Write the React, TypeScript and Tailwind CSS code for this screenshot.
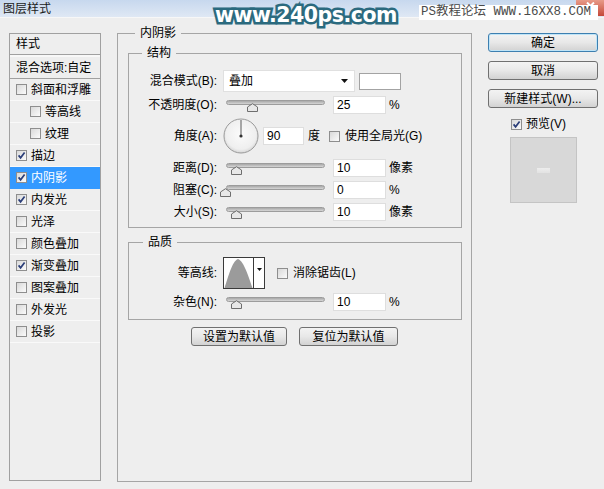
import React from "react";

function Check({ checked }: { checked?: boolean }) {
  return (
    <span className="relative inline-block w-[11px] h-[11px] shrink-0 border border-[#8e8e8e] bg-gradient-to-br from-[#d9d9d9] to-[#fbfbfb]">
      {checked && (
        <svg className="absolute left-0 top-0" width="9" height="9" viewBox="0 0 9 9">
          <path d="M1.6 4.4 L3.6 6.8 L7.6 1.6" stroke="#2a3d78" strokeWidth="1.7" fill="none" />
        </svg>
      )}
    </span>
  );
}

function Slider({ pos }: { pos: number }) {
  return (
    <div className="relative w-[104px] h-[22px] shrink-0">
      <div className="absolute left-[3px] right-[2px] top-[6px] h-[5px] rounded-full border border-[#9c9c9c] bg-gradient-to-b from-[#a8a8a8] to-[#d6d6d6]" />
      <svg className="absolute top-[9px]" style={{ left: pos - 5 }} width="11" height="9" viewBox="0 0 11 9">
        <path d="M0.5 4 L5.5 0.7 L10.5 4 V8.5 H0.5 Z" fill="#e8e8e8" stroke="#6e6e6e" />
      </svg>
    </div>
  );
}

function Label({ children }: { children: React.ReactNode }) {
  return <div className="w-[90px] shrink-0 pr-[2px] text-right whitespace-nowrap">{children}</div>;
}

function NumBox({ value }: { value: string }) {
  return (
    <div className="ml-[6px] w-[53px] h-[18px] shrink-0 bg-white border border-[#dedede] pl-[3px] flex items-center">
      {value}
    </div>
  );
}

function SliderRow({ label, pos, value, unit }: { label: string; pos: number; value: string; unit: string }) {
  return (
    <div className="flex items-center h-[22px]">
      <Label>{label}</Label>
      <div className="ml-[4px]">
        <Slider pos={pos} />
      </div>
      <NumBox value={value} />
      <span className="ml-[3px]">{unit}</span>
    </div>
  );
}

function Btn({ children, primary, className }: { children: React.ReactNode; primary?: boolean; className?: string }) {
  return (
    <div
      className={
        (primary
          ? "border-[#3d7fb0] shadow-[inset_0_0_0_1px_#bfe4f7] "
          : "border-[#707070] ") +
        "h-[19px] rounded-[3px] border bg-gradient-to-b from-[#f3f3f3] via-[#e8e8e8] to-[#d2d2d2] flex items-center justify-center leading-none text-[12px] " +
        (className || "")
      }
    >
      {children}
    </div>
  );
}

const items: { name: string; checked?: boolean; indent?: boolean; selected?: boolean }[] = [
  { name: "斜面和浮雕" },
  { name: "等高线", indent: true },
  { name: "纹理", indent: true },
  { name: "描边", checked: true },
  { name: "内阴影", checked: true, selected: true },
  { name: "内发光", checked: true },
  { name: "光泽" },
  { name: "颜色叠加" },
  { name: "渐变叠加", checked: true },
  { name: "图案叠加" },
  { name: "外发光" },
  { name: "投影" },
];

export default function App() {
  return (
    <div className="relative w-[604px] h-[489px] overflow-hidden bg-[#eeeeee] text-[12px] leading-[16px] text-black font-['Liberation_Sans','Noto_Sans_CJK_SC',sans-serif]">
      {/* title bar */}
      <div className="h-[18px] border-b border-[#f7f7f7] bg-gradient-to-b from-[#c7d8ee] to-[#dfe8f4] pl-[3px] flex items-center text-[#1b1b1b]">
        图层样式
      </div>

      <div className="flex pt-[15px]">
        {/* left panel */}
        <div className="ml-[9px] w-[92px] h-[448px] border border-[#a0a0a0] flex flex-col">
          <div className="h-[21px] pl-[6px] flex items-center border-b border-[#a0a0a0]">样式</div>
          <div className="h-[24px] pl-[6px] flex items-center border-t-[2px] border-t-[#f8f8f8] border-b border-b-[#a0a0a0] whitespace-nowrap">
            混合选项:自定
          </div>
          {items.map((it) => (
            <div
              key={it.name}
              className={
                "h-[22px] flex items-center border-b " +
                (it.selected ? "bg-[#3399ff] text-white border-[#3399ff] " : "border-[#f9f9f9] ") +
                (it.indent ? "pl-[20px]" : "pl-[6px]")
              }
            >
              <Check checked={it.checked} />
              <span className="ml-[4px] whitespace-nowrap">{it.name}</span>
            </div>
          ))}
        </div>

        {/* main fieldset */}
        <div className="relative ml-[16px] w-[355px] h-[449px] border border-[#a5a5a5] pt-[19px] pl-[10px]">
          <span className="absolute left-[17px] top-[-9px] px-[5px] bg-[#eeeeee] leading-[16px]">内阴影</span>

          {/* 结构 */}
          <div className="relative w-[334px] h-[175px] border border-[#a5a5a5] pt-[16px]">
            <span className="absolute left-[13px] top-[-9px] px-[5px] bg-[#eeeeee] leading-[16px]">结构</span>
            <div className="flex flex-col">
              <div className="flex items-center h-[22px]">
                <Label>混合模式(B):</Label>
                <div className="relative ml-[4px] w-[132px] h-[22px] bg-white border border-[#e0e0e0] pl-[5px] flex items-center">
                  叠加
                  <svg className="absolute right-[6px] top-[8px]" width="7" height="4" viewBox="0 0 7 4">
                    <path d="M0 0 H7 L3.5 4 Z" fill="#111" />
                  </svg>
                </div>
                <div className="ml-[4px] w-[42px] h-[17px] border border-[#a3a3a3] bg-white" />
              </div>

              <div className="mt-[2px]">
                <SliderRow label="不透明度(O):" pos={29} value="25" unit="%" />
              </div>

              <div className="mt-[2px] flex items-center h-[36px]">
                <Label>角度(A):</Label>
                <svg className="ml-[4px] shrink-0" width="36" height="36" viewBox="0 0 36 36">
                  <defs>
                    <radialGradient id="dialg" cx="50%" cy="45%" r="55%">
                      <stop offset="0%" stopColor="#fbfbfb" />
                      <stop offset="80%" stopColor="#efefef" />
                      <stop offset="100%" stopColor="#d6d6d6" />
                    </radialGradient>
                  </defs>
                  <circle cx="18" cy="18" r="17" fill="url(#dialg)" stroke="#9a9a9a" />
                  <line x1="18" y1="18" x2="18" y2="2" stroke="#5a5a5a" strokeWidth="1" />
                  <circle cx="18" cy="18" r="1.6" fill="#333" />
                </svg>
                <div className="ml-[4px] w-[41px] h-[18px] shrink-0 bg-white border border-[#dedede] pl-[3px] flex items-center">
                  90
                </div>
                <span className="ml-[4px]">度</span>
                <span className="ml-[9px] flex items-center">
                  <Check />
                </span>
                <span className="ml-[5px] whitespace-nowrap">使用全局光(G)</span>
              </div>

              <div className="mt-[3px]">
                <SliderRow label="距离(D):" pos={13} value="10" unit="像素" />
              </div>
              <SliderRow label="阻塞(C):" pos={2} value="0" unit="%" />
              <SliderRow label="大小(S):" pos={13} value="10" unit="像素" />
            </div>
          </div>

          {/* 品质 */}
          <div className="relative mt-[14px] w-[334px] h-[78px] border border-[#a5a5a5] pt-[14px]">
            <span className="absolute left-[14px] top-[-9px] px-[5px] bg-[#eeeeee] leading-[16px]">品质</span>
            <div className="flex items-center h-[32px]">
              <Label>等高线:</Label>
              <div className="ml-[4px] flex w-[42px] h-[32px] border border-[#3a3a3a] bg-white shrink-0">
                <svg width="29" height="30" viewBox="0 0 29 30">
                  <path d="M0.5 30 C4 20 8 3 14 1 C20 3 25 20 28.5 30 Z" fill="#9b9b9b" />
                </svg>
                <div className="w-[11px] border-l border-[#3a3a3a] flex justify-center pt-[10px]">
                  <svg width="5" height="3" viewBox="0 0 5 3">
                    <path d="M0 0 H5 L2.5 3 Z" fill="#111" />
                  </svg>
                </div>
              </div>
              <span className="ml-[12px] flex items-center">
                <Check />
              </span>
              <span className="ml-[5px] whitespace-nowrap">消除锯齿(L)</span>
            </div>
            <div className="mt-[3px] flex items-center h-[20px]">
              <Label>杂色(N):</Label>
              <div className="ml-[4px]">
                <Slider pos={13} />
              </div>
              <NumBox value="10" />
              <span className="ml-[3px]">%</span>
            </div>
          </div>

          <div className="mt-[7px] flex">
            <Btn className="ml-[63px] w-[96px]">设置为默认值</Btn>
            <Btn className="ml-[12px] w-[99px]">复位为默认值</Btn>
          </div>
        </div>

        {/* right column */}
        <div className="ml-[16px] w-[110px] flex flex-col">
          <Btn primary>确定</Btn>
          <Btn className="mt-[9px]">取消</Btn>
          <Btn className="mt-[9px]">新建样式(W)...</Btn>
          <div className="mt-[10px] h-[12px] pl-[23px] flex items-center">
            <Check checked />
            <span className="ml-[4px] whitespace-nowrap">预览(V)</span>
          </div>
          <div className="mt-[7px] self-center w-[67px] h-[66px] border border-[#c4c4c4] bg-[#d8d8d8] flex items-center justify-center">
            <div className="w-[13px] h-[5px] bg-gradient-to-b from-[#ededed] to-[#e2e2e2]" />
          </div>
        </div>
      </div>

      {/* close button */}
      <div className="absolute right-0 top-0 w-[28px] h-[16px] rounded-bl-[3px] bg-gradient-to-b from-[#e79a88] to-[#c4473a] flex items-start justify-center pt-[2px]">
        <svg width="9" height="8" viewBox="0 0 9 8">
          <path d="M1 0.5 L8 7.5 M8 0.5 L1 7.5" stroke="#ffffff" strokeWidth="2" />
        </svg>
      </div>

      {/* watermark: forum */}
      <div className="absolute left-[419px] top-[5px] w-[179px] h-[15px] bg-white pl-[2px] flex items-center whitespace-nowrap text-[12.5px] leading-none text-[#4a4a4a] font-['Liberation_Mono','Noto_Sans_CJK_SC',monospace]">
        PS教程论坛 WWW.16XX8.COM
      </div>

      {/* watermark: site */}
      <div className="absolute left-[215px] top-[5px] whitespace-nowrap font-['DejaVu_Sans',sans-serif] font-bold text-[20.5px] leading-none tracking-[-0.5px] text-white [-webkit-text-stroke:5px_#2b6a7e] [paint-order:stroke_fill]">
        www.240ps.com
      </div>
    </div>
  );
}
